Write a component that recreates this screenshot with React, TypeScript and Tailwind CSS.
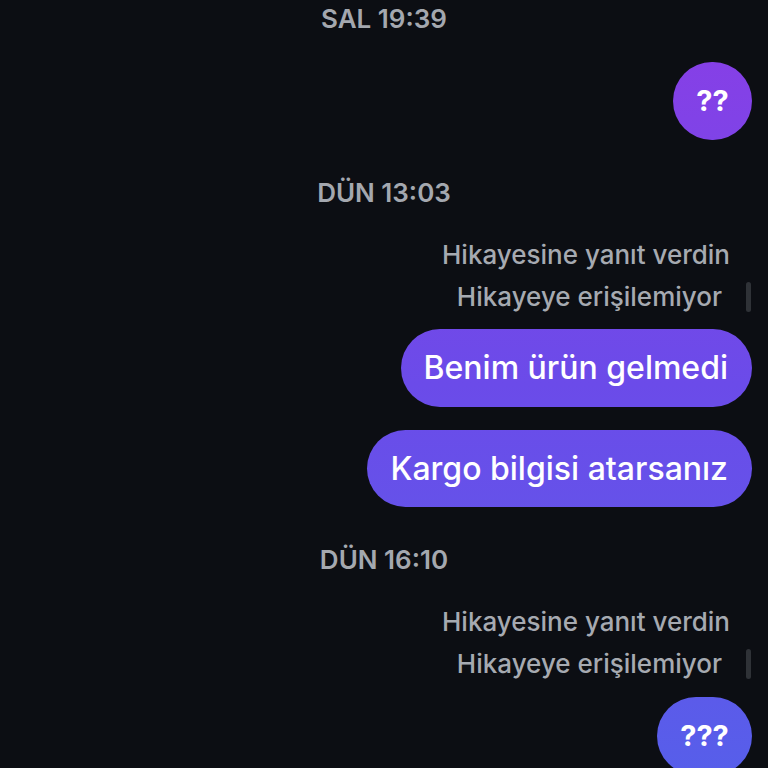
import React from "react";

const font = { fontFamily: "Inter, 'Noto Sans', sans-serif" };

function Stamp({ children, className }: { children: React.ReactNode; className: string }) {
  return (
    <div className={`h-[26px] leading-[26px] text-center text-[26px] font-semibold text-[#a4a8af] ${className}`}>
      {children}
    </div>
  );
}

function StoryReply({ top }: { top: string }) {
  return (
    <>
      <div className={`${top} h-[28px] leading-[28px] text-right pr-[38px] text-[26px] font-medium text-[#a6aab1]`}>
        Hikayesine yanıt verdin
      </div>
      <div className="mt-[14px] h-[28px] flex items-center justify-end pr-[17px]">
        <span className="leading-[28px] text-[26px] font-medium text-[#a6aab1]">Hikayeye erişilemiyor</span>
        <span className="ml-[24px] w-[5px] h-[30px] rounded-full bg-[#2f3237]" />
      </div>
    </>
  );
}

const bubble =
  "bg-fixed bg-linear-to-b from-[#8a3de6] via-[#6b4be9] to-[#575eea] text-white rounded-full flex items-center justify-center";

export default function App() {
  return (
    <div className="w-[768px] h-[768px] overflow-hidden bg-[#0c0e13]" style={font}>
      <div className="pt-[6px]">
        <Stamp className="">SAL 19:39</Stamp>
        <div className="mt-[30px] flex justify-end pr-[16px]">
          <div className={`${bubble} w-[79px] h-[78px] text-[29px] font-bold`}>??</div>
        </div>
        <Stamp className="mt-[40px]">DÜN 13:03</Stamp>
        <StoryReply top="mt-[35px]" />
        <div className="mt-[18px] flex justify-end pr-[16px]">
          <div className={`${bubble} h-[78px] pl-[23px] pr-[24px] text-[32px] font-medium`}>Benim ürün gelmedi</div>
        </div>
        <div className="mt-[23px] flex justify-end pr-[16px]">
          <div className={`${bubble} h-[77px] pl-[23px] pr-[24px] text-[32px] font-medium`}>Kargo bilgisi atarsanız</div>
        </div>
        <Stamp className="mt-[40px]">DÜN 16:10</Stamp>
        <StoryReply top="mt-[35px]" />
        <div className="mt-[19px] flex justify-end pr-[16px]">
          <div className={`${bubble} w-[95px] h-[78px] text-[29px] font-bold`}>???</div>
        </div>
      </div>
    </div>
  );
}
